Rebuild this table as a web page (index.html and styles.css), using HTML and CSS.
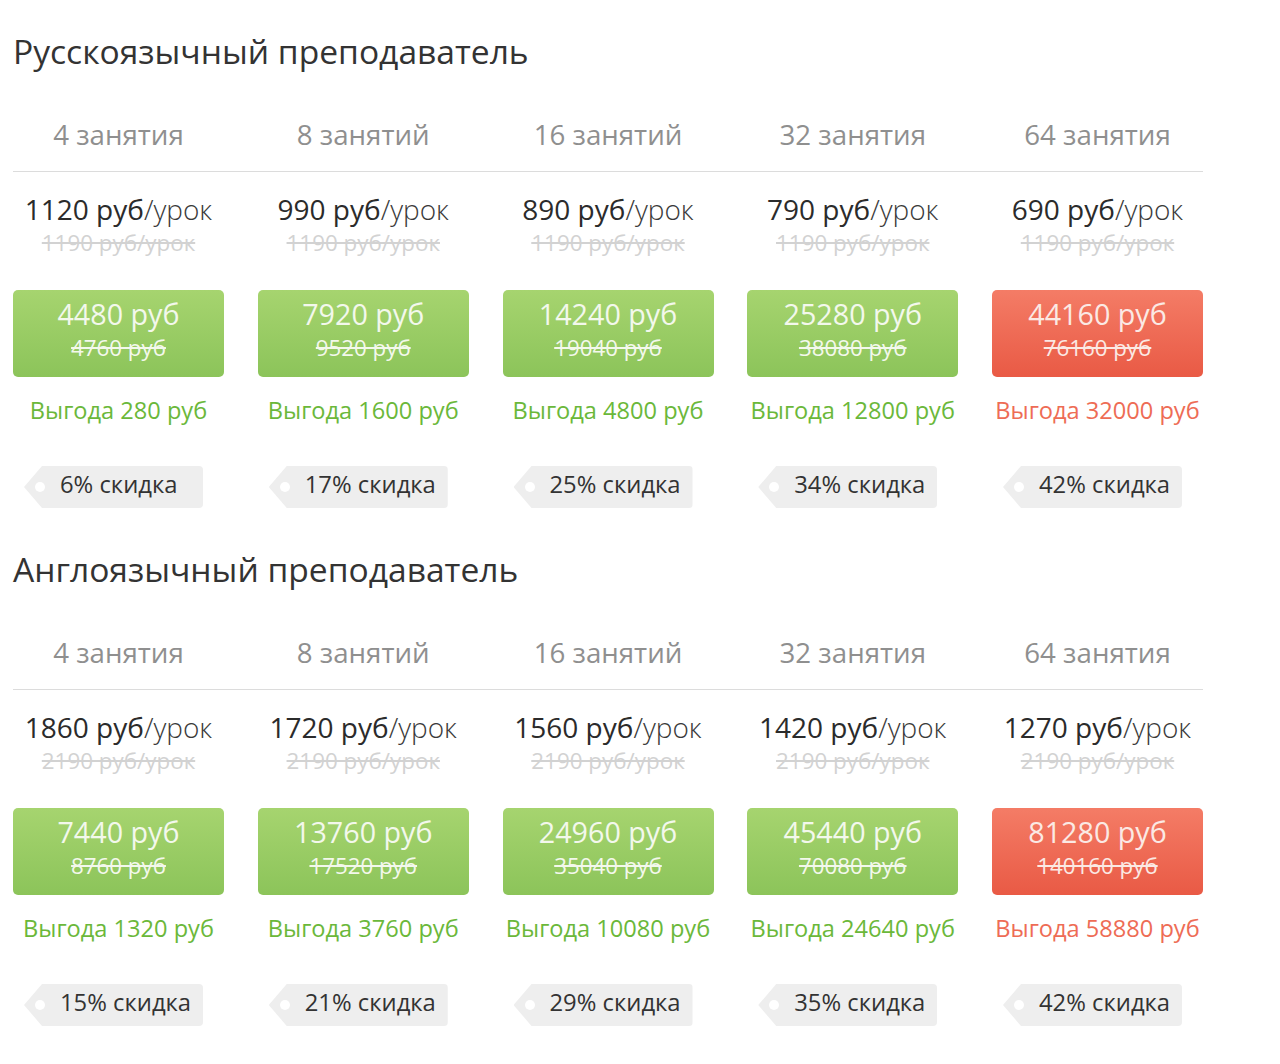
FILE: index.html
```html
<!DOCTYPE html>
<html lang="ru">
<head>
<meta charset="utf-8">
<title>Цены</title>
<link rel="stylesheet" href="styles.css">
</head>
<body>
<div class="page">
  <section class="plan">
    <h2 class="plan-title">Русскоязычный преподаватель</h2>
    <div class="row head">
      <div class="cell">4 занятия</div>
      <div class="cell">8 занятий</div>
      <div class="cell">16 занятий</div>
      <div class="cell">32 занятия</div>
      <div class="cell">64 занятия</div>
    </div>
    <div class="row body">
      <div class="col">
        <div class="price"><b>1120 руб</b><span>/урок</span></div>
        <div class="old">1190 руб/урок</div>
        <div class="btn green"><div class="btn-price">4480 руб</div><div class="btn-old">4760 руб</div></div>
        <div class="save">Выгода 280 руб</div>
        <div class="tag">6% скидка</div>
      </div>
      <div class="col">
        <div class="price"><b>990 руб</b><span>/урок</span></div>
        <div class="old">1190 руб/урок</div>
        <div class="btn green"><div class="btn-price">7920 руб</div><div class="btn-old">9520 руб</div></div>
        <div class="save">Выгода 1600 руб</div>
        <div class="tag">17% скидка</div>
      </div>
      <div class="col">
        <div class="price"><b>890 руб</b><span>/урок</span></div>
        <div class="old">1190 руб/урок</div>
        <div class="btn green"><div class="btn-price">14240 руб</div><div class="btn-old">19040 руб</div></div>
        <div class="save">Выгода 4800 руб</div>
        <div class="tag">25% скидка</div>
      </div>
      <div class="col">
        <div class="price"><b>790 руб</b><span>/урок</span></div>
        <div class="old">1190 руб/урок</div>
        <div class="btn green"><div class="btn-price">25280 руб</div><div class="btn-old">38080 руб</div></div>
        <div class="save">Выгода 12800 руб</div>
        <div class="tag">34% скидка</div>
      </div>
      <div class="col">
        <div class="price"><b>690 руб</b><span>/урок</span></div>
        <div class="old">1190 руб/урок</div>
        <div class="btn red"><div class="btn-price">44160 руб</div><div class="btn-old">76160 руб</div></div>
        <div class="save hot">Выгода 32000 руб</div>
        <div class="tag">42% скидка</div>
      </div>
    </div>
  </section>

  <section class="plan">
    <h2 class="plan-title">Англоязычный преподаватель</h2>
    <div class="row head">
      <div class="cell">4 занятия</div>
      <div class="cell">8 занятий</div>
      <div class="cell">16 занятий</div>
      <div class="cell">32 занятия</div>
      <div class="cell">64 занятия</div>
    </div>
    <div class="row body">
      <div class="col">
        <div class="price"><b>1860 руб</b><span>/урок</span></div>
        <div class="old">2190 руб/урок</div>
        <div class="btn green"><div class="btn-price">7440 руб</div><div class="btn-old">8760 руб</div></div>
        <div class="save">Выгода 1320 руб</div>
        <div class="tag">15% скидка</div>
      </div>
      <div class="col">
        <div class="price"><b>1720 руб</b><span>/урок</span></div>
        <div class="old">2190 руб/урок</div>
        <div class="btn green"><div class="btn-price">13760 руб</div><div class="btn-old">17520 руб</div></div>
        <div class="save">Выгода 3760 руб</div>
        <div class="tag">21% скидка</div>
      </div>
      <div class="col">
        <div class="price"><b>1560 руб</b><span>/урок</span></div>
        <div class="old">2190 руб/урок</div>
        <div class="btn green"><div class="btn-price">24960 руб</div><div class="btn-old">35040 руб</div></div>
        <div class="save">Выгода 10080 руб</div>
        <div class="tag">29% скидка</div>
      </div>
      <div class="col">
        <div class="price"><b>1420 руб</b><span>/урок</span></div>
        <div class="old">2190 руб/урок</div>
        <div class="btn green"><div class="btn-price">45440 руб</div><div class="btn-old">70080 руб</div></div>
        <div class="save">Выгода 24640 руб</div>
        <div class="tag">35% скидка</div>
      </div>
      <div class="col">
        <div class="price"><b>1270 руб</b><span>/урок</span></div>
        <div class="old">2190 руб/урок</div>
        <div class="btn red"><div class="btn-price">81280 руб</div><div class="btn-old">140160 руб</div></div>
        <div class="save hot">Выгода 58880 руб</div>
        <div class="tag">42% скидка</div>
      </div>
    </div>
  </section>
</div>
</body>
</html>
```

FILE: styles.css
```css
html, body {
  margin: 0;
  padding: 0;
  background: #ffffff;
}
body {
  font-family: "Open Sans", "Noto Sans", "DejaVu Sans", sans-serif;
  color: #333;
}
.page {
  padding: 31px 0 0 13px;
  width: 1190px;
}
.plan + .plan {
  margin-top: 41px;
}
.plan-title {
  margin: 0;
  font-weight: 400;
  font-size: 33.6px;
  line-height: 40px;
  color: #333;
}
.row {
  display: grid;
  grid-template-columns: repeat(5, 211px);
  column-gap: 33.75px;
}
.head {
  margin-top: 43px;
  padding-bottom: 17px;
  border-bottom: 1px solid #dcdcdc;
}
.head .cell {
  text-align: center;
  font-size: 27.7px;
  line-height: 40px;
  color: #8f8f8f;
  white-space: nowrap;
}
.body .col {
  display: flex;
  flex-direction: column;
  align-items: stretch;
}
.price {
  margin-top: 20px;
  text-align: center;
  font-size: 28px;
  line-height: 34px;
  color: #2b2b2b;
  white-space: nowrap;
}
.price b {
  font-weight: 400;
}
.price span {
  font-weight: 300;
  color: #3a3a3a;
}
.old {
  margin-top: 4px;
  text-align: center;
  font-size: 22.4px;
  line-height: 26px;
  color: #d2d2d2;
  text-decoration: line-through;
  white-space: nowrap;
}
.btn {
  margin-top: 34px;
  height: 87px;
  box-sizing: border-box;
  padding-top: 7px;
  border-radius: 5px;
  text-align: center;
  color: #f3f8ec;
}
.btn.green {
  background: linear-gradient(#a6d46f, #8cc45a);
}
.btn.red {
  background: linear-gradient(#f47c66, #e95a45);
  color: #fbe9e4;
}
.btn-price {
  font-size: 28.7px;
  line-height: 34px;
  white-space: nowrap;
}
.btn-old {
  margin-top: 4px;
  font-size: 22.3px;
  line-height: 26px;
  text-decoration: line-through;
  white-space: nowrap;
}
.save {
  margin-top: 18px;
  text-align: center;
  font-size: 23.6px;
  line-height: 30px;
  color: #6bb83a;
  white-space: nowrap;
}
.save.hot {
  color: #ee6c55;
}
.tag {
  position: relative;
  margin-top: 41px;
  margin-left: 11px;
  width: 179px;
  height: 42px;
  box-sizing: border-box;
  padding-left: 36px;
  background: #eeeeee;
  border-radius: 0 4px 4px 0;
  clip-path: polygon(18px 0, 100% 0, 100% 100%, 18px 100%, 0 50%);
  font-size: 23.8px;
  line-height: 37px;
  color: #333;
  white-space: nowrap;
}
.tag::before {
  content: "";
  position: absolute;
  left: 11px;
  top: 16px;
  width: 10px;
  height: 10px;
  border-radius: 50%;
  background: #ffffff;
}
```
